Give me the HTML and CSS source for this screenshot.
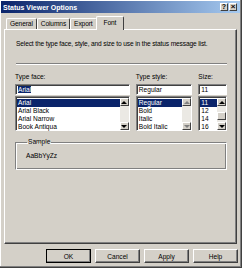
FILE: index.html
```html
<!DOCTYPE html>
<html lang="en">
<head>
  <meta charset="UTF-8">
  <title>Status Viewer Options</title>
  <link rel="stylesheet" href="styles.css">
</head>
<body>
  <div class="dialog">
    <div class="titlebar">
      <span class="title">Status Viewer Options</span>
      <div class="caption-btns">
        <span class="cbtn">?</span>
        <span class="cbtn close">&#215;</span>
      </div>
    </div>

    <div class="tabs">
      <div class="tab">General</div>
      <div class="tab">Columns</div>
      <div class="tab">Export</div>
      <div class="tab active">Font</div>
    </div>

    <div class="panel">
      <p class="intro">Select the type face, style, and size to use in the status message list.</p>
      <div class="sep"></div>

      <div class="pickers">
        <div class="col col-face">
          <div class="label">Type face:</div>
          <div class="field"><span class="sel-text">Arial</span></div>
          <div class="list">
            <div class="items">
              <div class="item on">Arial</div>
              <div class="item">Arial Black</div>
              <div class="item">Arial Narrow</div>
              <div class="item">Book Antiqua</div>
            </div>
            <div class="vscroll">
              <div class="sbtn"><span class="arr up"></span></div>
              <div class="track"></div>
              <div class="sbtn"><span class="arr down"></span></div>
            </div>
          </div>
        </div>

        <div class="col col-style">
          <div class="label">Type style:</div>
          <div class="field">Regular</div>
          <div class="list">
            <div class="items">
              <div class="item on">Regular</div>
              <div class="item">Bold</div>
              <div class="item">Italic</div>
              <div class="item">Bold Italic</div>
            </div>
            <div class="vscroll">
              <div class="sbtn"><span class="arr up off"></span></div>
              <div class="track"></div>
              <div class="sbtn"><span class="arr down off"></span></div>
            </div>
          </div>
        </div>

        <div class="col col-size">
          <div class="label">Size:</div>
          <div class="field">11</div>
          <div class="list">
            <div class="items">
              <div class="item on">11</div>
              <div class="item">12</div>
              <div class="item">14</div>
              <div class="item">16</div>
            </div>
            <div class="vscroll">
              <div class="sbtn"><span class="arr up"></span></div>
              <div class="track">
                <div class="thumb"></div>
              </div>
              <div class="sbtn"><span class="arr down"></span></div>
            </div>
          </div>
        </div>
      </div>

      <fieldset class="sample">
        <legend>Sample</legend>
        <div class="sample-text">AaBbYyZz</div>
      </fieldset>
    </div>

    <div class="buttons">
      <button class="btn default">OK</button>
      <button class="btn">Cancel</button>
      <button class="btn">Apply</button>
      <button class="btn">Help</button>
    </div>
  </div>
</body>
</html>
```

FILE: styles.css
```css
body {
  margin: 0;
  background-color: #d4d0c8;
  font-family: "Liberation Sans", Arial, sans-serif;
  font-size: 6.6px;
  color: #000;
}
.dialog {
  width: 242px;
  height: 268px;
  box-sizing: border-box;
  background-color: #d4d0c8;
  border-right: 1px solid #404040;
  border-bottom: 1px solid #404040;
  box-shadow: inset -1px -1px 0 #808080, inset 1px 1px 0 #fff;
  overflow: hidden;
}
.titlebar {
  height: 12px;
  margin: 1px 1px 0 1px;
  display: flex;
  align-items: center;
  justify-content: space-between;
  background: linear-gradient(to right, #0a246a, #a6caf0);
}
.title {
  color: #fff;
  font-weight: bold;
  font-size: 7px;
  padding-left: 2px;
}
.caption-btns {
  display: flex;
  gap: 1px;
  padding-right: 3px;
}
.cbtn {
  width: 8px;
  height: 8px;
  box-sizing: border-box;
  background-color: #d4d0c8;
  border: 1px solid;
  border-color: #fff #404040 #404040 #fff;
  font-size: 7px;
  font-weight: bold;
  line-height: 6px;
  text-align: center;
}
.close {
  font-size: 8px;
}
.tabs {
  display: flex;
  align-items: flex-end;
  height: 13px;
  margin: 3px 0 0 6px;
  position: relative;
  z-index: 1;
}
.tab {
  height: 11px;
  box-sizing: border-box;
  padding: 0 3px;
  line-height: 10px;
  border: 1px solid;
  border-color: #fff #404040 transparent #fff;
  border-bottom: none;
  border-radius: 2px 2px 0 0;
  background-color: #d4d0c8;
  letter-spacing: -0.1px;
}
.tab.active {
  height: 14px;
  margin-bottom: -1px;
  padding: 0 7px;
  line-height: 12px;
  margin-left: -1px;
}
.panel {
  margin-left: 4px;
  width: 233px;
  height: 215px;
  box-sizing: border-box;
  border: 1px solid;
  border-color: #fff #404040 #404040 #fff;
  box-shadow: inset -1px -1px 0 #808080;
  padding: 10px 9px 0 10px;
}
.intro {
  margin: 0 0 0 1px;
  line-height: 8px;
  white-space: nowrap;
  letter-spacing: -0.13px;
}
.sep {
  margin: 15px 0 0 1px;
  height: 0;
  border-top: 1px solid #808080;
  border-bottom: 1px solid #fff;
}
.pickers {
  display: flex;
  gap: 6px;
  margin-top: 8px;
}
.col-face { width: 116px; }
.col-style { width: 57px; }
.col-size { width: 29px; }
.label {
  line-height: 8px;
  margin-bottom: 3px;
}
.field {
  height: 11px;
  box-sizing: border-box;
  border: 1px solid;
  border-color: #808080 #fff #fff #808080;
  box-shadow: inset 1px 1px 0 #404040;
  background-color: #fff;
  padding-left: 2px;
  line-height: 9px;
}
.sel-text {
  background-color: #0a246a;
  color: #fff;
}
.list {
  margin-top: 1px;
  height: 35px;
  box-sizing: border-box;
  border: 1px solid;
  border-color: #808080 #fff #fff #808080;
  box-shadow: inset 1px 1px 0 #404040;
  background-color: #fff;
  display: flex;
  padding: 1px 0 0 1px;
}
.items {
  flex: 1;
  padding-top: 1px;
}
.item {
  height: 8px;
  line-height: 8px;
  padding-left: 1px;
  white-space: nowrap;
  overflow: hidden;
}
.item.on {
  background-color: #0a246a;
  color: #fff;
}
.vscroll {
  width: 9px;
  display: flex;
  flex-direction: column;
}
.sbtn {
  height: 8px;
  box-sizing: border-box;
  background-color: #d4d0c8;
  border: 1px solid;
  border-color: #fff #404040 #404040 #fff;
  display: flex;
  align-items: center;
  justify-content: center;
}
.track {
  flex: 1;
  background-color: #ebe9e4;
}
.thumb {
  height: 8px;
  margin-top: 6px;
  box-sizing: border-box;
  background-color: #d4d0c8;
  border: 1px solid;
  border-color: #fff #404040 #404040 #fff;
}
.arr {
  width: 0;
  height: 0;
  border-left: 3px solid transparent;
  border-right: 3px solid transparent;
}
.arr.up { border-bottom: 3px solid #000; }
.arr.down { border-top: 3px solid #000; }
.arr.up.off { border-bottom-color: #808080; }
.arr.down.off { border-top-color: #808080; }
.sample {
  margin: 7px 0 0 0;
  width: 212px;
  height: 32px;
  box-sizing: border-box;
  border: 1px solid;
  border-color: #808080 #fff #fff #808080;
  box-shadow: inset 1px 1px 0 #fff, inset -1px -1px 0 #808080;
  padding: 6px 10px;
}
.sample legend {
  padding: 0 1px;
  margin-left: 1px;
  line-height: 8px;
}
.sample-text {
  line-height: 8px;
}
.buttons {
  display: flex;
  gap: 4px;
  margin: 5px 0 0 46px;
}
.btn {
  width: 45px;
  height: 14px;
  padding: 0;
  font-family: "Liberation Sans", Arial, sans-serif;
  font-size: 6.6px;
  color: #000;
  background-color: #d4d0c8;
  border: 1px solid;
  border-color: #fff #404040 #404040 #fff;
  box-shadow: inset -1px -1px 0 #808080;
}
.btn.default {
  outline: 1px solid #000;
  outline-offset: -1px;
}
```
